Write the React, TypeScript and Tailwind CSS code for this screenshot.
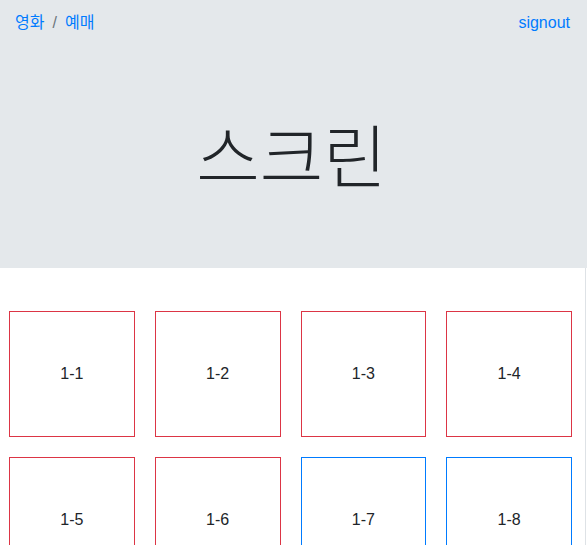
const seats = [
  { id: "1-1", taken: true },
  { id: "1-2", taken: true },
  { id: "1-3", taken: true },
  { id: "1-4", taken: true },
  { id: "1-5", taken: true },
  { id: "1-6", taken: true },
  { id: "1-7", taken: false },
  { id: "1-8", taken: false },
];

export default function App() {
  return (
    <div className="min-h-[545px] bg-white text-[#212529] font-['Liberation_Sans','Noto_Sans_CJK_KR',sans-serif]">
      <div className="bg-[#e4e8eb]">
        <nav className="h-[46px] pl-[15px] pr-[17px] flex items-center justify-between text-[16px]">
          <div className="flex items-center">
            <a className="text-[#007bff]">영화</a>
            <span className="px-[8px] text-[#6c757d]">/</span>
            <a className="text-[#007bff]">예매</a>
          </div>
          <a className="text-[#007bff]">signout</a>
        </nav>
        <div className="h-[222px] flex items-center justify-center pb-[8px] pr-[4px]">
          <h1 className="text-[69px] font-light leading-none font-['Noto_Sans_CJK_KR',sans-serif]">스크린</h1>
        </div>
      </div>
      <div className="border-r border-[#dee2e6] mr-[1px] min-h-[277px] pt-[43px] pl-[9px] pr-[13px]">
        <div className="grid grid-cols-4 gap-x-[20px] gap-y-[20px]">
          {seats.map((s) => (
            <div
              key={s.id}
              className={
                "h-[126px] flex items-center justify-center border text-[16px] " +
                (s.taken ? "border-[#dc3545]" : "border-[#007bff]")
              }
            >
              {s.id}
            </div>
          ))}
        </div>
      </div>
    </div>
  );
}
